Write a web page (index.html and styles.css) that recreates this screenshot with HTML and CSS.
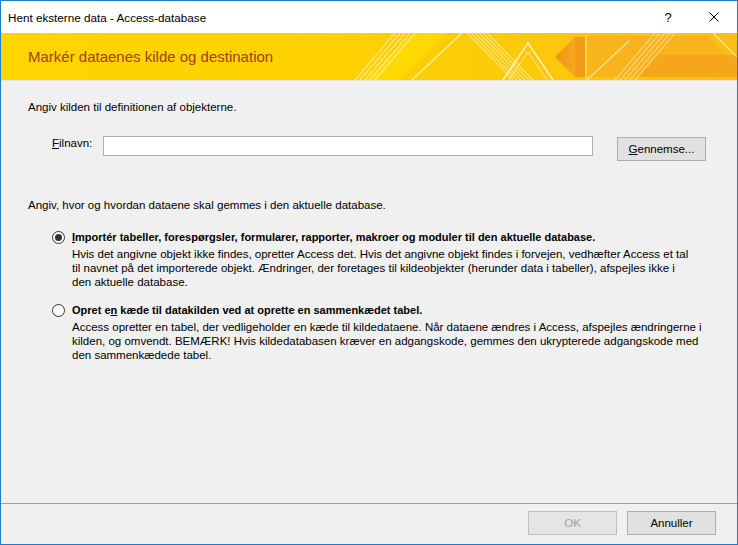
FILE: index.html
```html
<!DOCTYPE html>
<html>
<head>
    <title>Hent eksterne data - Access-database</title>
    <link rel="stylesheet" href="styles.css">
</head>
<body>
    <div class="window">
        <div class="titlebar">
            <span class="title">Hent eksterne data - Access-database</span>
            <span class="caption-btn help">?</span>
            <span class="caption-btn close">
                <svg width="10" height="10" viewBox="0 0 10 10">
                    <path d="M0.5 0.5 L9.5 9.5 M9.5 0.5 L0.5 9.5" stroke="#000" stroke-width="1" fill="none"/>
                </svg>
            </span>
        </div>

        <div class="banner">
            <h1>Markér dataenes kilde og destination</h1>
            <svg class="banner-art" width="400" height="47" viewBox="0 0 400 47">
                <defs>
                    <linearGradient id="arrow" x1="0" y1="0" x2="1" y2="0">
                        <stop offset="0" stop-color="#f29418"/>
                        <stop offset="1" stop-color="#f5a81e"/>
                    </linearGradient>
                </defs>
                <!-- light band -->
                <polygon points="28,47 62,47 110,0 76,0" fill="#ffe400" opacity="0.5"/>
                <!-- stripe bundle going up -->
                <g stroke="#fff" stroke-width="1.2" opacity="0.5">
                    <line x1="18" y1="47" x2="58" y2="0"/>
                    <line x1="23" y1="47" x2="63" y2="0"/>
                    <line x1="28" y1="47" x2="68" y2="0"/>
                    <line x1="33" y1="47" x2="73" y2="0"/>
                    <line x1="38" y1="47" x2="78" y2="0"/>
                </g>
                <line x1="75" y1="47" x2="125" y2="0" stroke="#fff6b0" stroke-width="1.5" opacity="0.8"/>
                <!-- stripe bundle going down -->
                <g stroke="#fff" stroke-width="1.2" opacity="0.45">
                    <line x1="130" y1="0" x2="176" y2="47"/>
                    <line x1="134" y1="0" x2="180" y2="47"/>
                    <line x1="138" y1="0" x2="184" y2="47"/>
                    <line x1="142" y1="0" x2="188" y2="47"/>
                    <line x1="146" y1="0" x2="192" y2="47"/>
                    <line x1="150" y1="0" x2="196" y2="47"/>
                </g>
                <!-- orange band and arrow -->
                <polygon points="250,3 370,3 400,33 400,44 250,44" fill="#f7b01f" opacity="0.85"/>
                <polygon points="300,44 322,22 400,22 400,44" fill="#f5a21c" opacity="0.8"/>
                <polygon points="218,24 238,4 238,44" fill="url(#arrow)"/>
                <rect x="238" y="4" width="10" height="40" fill="#f39c1a"/>
                <line x1="249" y1="2" x2="249" y2="46" stroke="#fff" stroke-width="1" opacity="0.5"/>
                <!-- chevron -->
                <polyline points="166,47 191,10 216,47" fill="none" stroke="#fff" stroke-width="1.5" opacity="0.75"/>
                <polyline points="172,47 191,19 210,47" fill="none" stroke="#fff" stroke-width="1" opacity="0.55"/>
                <!-- right stripes -->
                <line x1="250" y1="47" x2="292" y2="8" stroke="#fff" stroke-width="1.2" opacity="0.6"/>
                <g stroke="#fff" stroke-width="1.2" opacity="0.4">
                    <line x1="278" y1="47" x2="318" y2="0"/>
                    <line x1="283" y1="47" x2="323" y2="0"/>
                    <line x1="288" y1="47" x2="328" y2="0"/>
                    <line x1="293" y1="47" x2="333" y2="0"/>
                    <line x1="298" y1="47" x2="338" y2="0"/>
                </g>
                <line x1="376" y1="0" x2="400" y2="24" stroke="#fff" stroke-width="1.2" opacity="0.6"/>
            </svg>
        </div>

        <div class="content">
            <p class="intro">Angiv kilden til definitionen af objekterne.</p>

            <div class="file-row">
                <label class="file-label"><u>F</u>ilnavn:</label>
                <div class="textbox"></div>
                <button class="btn browse"><u>G</u>ennemse...</button>
            </div>

            <p class="intro storage">Angiv, hvor og hvordan dataene skal gemmes i den aktuelle database.</p>

            <div class="option">
                <span class="radio checked"></span>
                <div>
                    <div class="opt-label"><u>I</u>mportér tabeller, forespørgsler, formularer, rapporter, makroer og moduler til den aktuelle database.</div>
                    <div class="opt-desc">Hvis det angivne objekt ikke findes, opretter Access det. Hvis det angivne objekt findes i forvejen, vedhæfter Access et tal<br>til navnet på det importerede objekt. Ændringer, der foretages til kildeobjekter (herunder data i tabeller), afspejles ikke i<br>den aktuelle database.</div>
                </div>
            </div>

            <div class="option second">
                <span class="radio"></span>
                <div>
                    <div class="opt-label">Opret e<u>n</u> kæde til datakilden ved at oprette en sammenkædet tabel.</div>
                    <div class="opt-desc">Access opretter en tabel, der vedligeholder en kæde til kildedataene. Når dataene ændres i Access, afspejles ændringerne i<br>kilden, og omvendt. BEMÆRK! Hvis kildedatabasen kræver en adgangskode, gemmes den ukrypterede adgangskode med<br>den sammenkædede tabel.</div>
                </div>
            </div>
        </div>

        <div class="footer">
            <button class="btn disabled">OK</button>
            <button class="btn">Annuller</button>
        </div>
    </div>
</body>
</html>
```

FILE: styles.css
```css
body {
    margin: 0;
    font-family: "Liberation Sans", Arial, sans-serif;
    font-size: 11.5px;
    color: #000;
    background: #f0f0f0;
}

.window {
    width: 738px;
    height: 545px;
    box-sizing: border-box;
    border: 1px solid #1b7cd1;
    background-color: #f0f0f0;
    display: flex;
    flex-direction: column;
}

/* title bar */
.titlebar {
    height: 32px;
    background-color: #fff;
    display: flex;
    align-items: center;
}

.title {
    flex: 1;
    padding-left: 7px;
    font-size: 11.7px;
}

.caption-btn {
    width: 46px;
    height: 32px;
    display: flex;
    align-items: center;
    justify-content: center;
}

.help {
    font-size: 13px;
}

/* yellow banner */
.banner {
    height: 47px;
    background: linear-gradient(to right, #fdd500 0%, #fdd200 45%, #fbc80c 75%, #f9bf12 100%);
    border-bottom: 1px solid #e4e4e4;
    display: flex;
    align-items: center;
    justify-content: space-between;
}

.banner h1 {
    margin: 0;
    padding-left: 27px;
    font-size: 15px;
    font-weight: normal;
    color: #a3400c;
}

.banner-art {
    flex-shrink: 0;
    display: block;
}

/* content */
.content {
    padding: 19px 0 0 27px;
}

.intro {
    margin: 0;
    line-height: 14px;
}

.intro.storage {
    margin-top: 37px;
}

.file-row {
    display: flex;
    align-items: flex-start;
    margin: 22px 0 0 24px;
}

.file-label {
    width: 51px;
    line-height: 14px;
}

.textbox {
    width: 490px;
    height: 20px;
    box-sizing: border-box;
    border: 1px solid #acacac;
    background-color: #fff;
}

.btn {
    width: 89px;
    height: 24px;
    box-sizing: border-box;
    border: 1px solid #adadad;
    background-color: #e1e1e1;
    font-family: "Liberation Sans", Arial, sans-serif;
    font-size: 11.5px;
    color: #000;
    padding: 0;
}

.browse {
    margin: 1px 0 0 24px;
}

.btn.disabled {
    color: #a0a0a0;
    border-color: #bfbfbf;
    background-color: #e5e5e5;
}

.option {
    display: grid;
    grid-template-columns: 20px 1fr;
    margin: 18px 0 0 24px;
}

.option.second {
    margin-top: 14px;
}

.radio {
    width: 13px;
    height: 13px;
    box-sizing: border-box;
    border: 1px solid #333;
    border-radius: 50%;
    background-color: #fff;
    margin-top: 1px;
    display: flex;
    align-items: center;
    justify-content: center;
}

.radio.checked::after {
    content: "";
    width: 7px;
    height: 7px;
    border-radius: 50%;
    background-color: #333;
}

.opt-label {
    font-size: 11px;
    font-weight: bold;
    line-height: 14px;
}

.opt-desc {
    margin-top: 3px;
    line-height: 14px;
}

/* bottom buttons */
.footer {
    margin-top: auto;
    border-top: 1px solid #a0a0a0;
    padding: 7px 21px 9px 0;
    display: flex;
    justify-content: flex-end;
    gap: 10px;
}
```
